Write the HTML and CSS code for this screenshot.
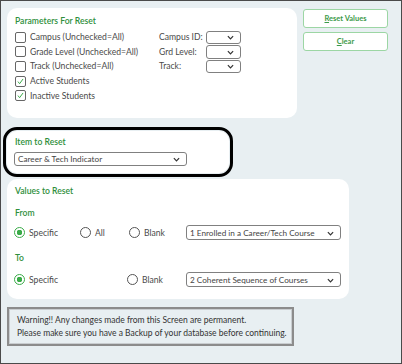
FILE: index.html
```html
<!DOCTYPE html>
<html lang="en">
<head>
    <meta charset="UTF-8">
    <meta name="viewport" content="width=device-width, initial-scale=1.0">
    <title>Reset Values</title>
    <link rel="stylesheet" href="styles.css">
</head>
<body>
    <div class="frame">
        <div class="top-row">
            <section class="panel params">
                <h3 class="panel-title">Parameters For Reset</h3>
                <div class="params-body">
                    <div class="checks">
                        <label class="check-row"><span class="box"></span>Campus (Unchecked=All)</label>
                        <label class="check-row"><span class="box"></span>Grade Level (Unchecked=All)</label>
                        <label class="check-row"><span class="box"></span>Track (Unchecked=All)</label>
                        <label class="check-row"><span class="box checked"><svg viewBox="0 0 11 11"><path d="M2.4 5.6 L4.4 8.2 L8.6 2.4" /></svg></span>Active Students</label>
                        <label class="check-row"><span class="box checked"><svg viewBox="0 0 11 11"><path d="M2.4 5.6 L4.4 8.2 L8.6 2.4" /></svg></span>Inactive Students</label>
                    </div>
                    <div class="fields">
                        <span class="field-label">Campus ID:</span>
                        <span class="select small"><svg class="chev" viewBox="0 0 8 5"><path d="M1 1 L4 4 L7 1" /></svg></span>
                        <span class="field-label">Grd Level:</span>
                        <span class="select small"><svg class="chev" viewBox="0 0 8 5"><path d="M1 1 L4 4 L7 1" /></svg></span>
                        <span class="field-label">Track:</span>
                        <span class="select small"><svg class="chev" viewBox="0 0 8 5"><path d="M1 1 L4 4 L7 1" /></svg></span>
                    </div>
                </div>
            </section>
            <div class="actions">
                <button class="btn"><u>R</u>eset Values</button>
                <button class="btn"><u>C</u>lear</button>
            </div>
        </div>

        <section class="panel item highlight">
            <h3 class="panel-title">Item to Reset</h3>
            <span class="select item-select">Career &amp; Tech Indicator<svg class="chev" viewBox="0 0 8 5"><path d="M1 1 L4 4 L7 1" /></svg></span>
        </section>

        <section class="panel values">
            <h3 class="panel-title">Values to Reset</h3>
            <div class="sub-title from">From</div>
            <div class="radio-row first">
                <label class="radio-opt"><span class="radio on"></span>Specific</label>
                <label class="radio-opt"><span class="radio"></span>All</label>
                <label class="radio-opt"><span class="radio"></span>Blank</label>
                <span class="select value-select">1 Enrolled in a Career/Tech Course<svg class="chev" viewBox="0 0 8 5"><path d="M1 1 L4 4 L7 1" /></svg></span>
            </div>
            <div class="sub-title to">To</div>
            <div class="radio-row second">
                <label class="radio-opt"><span class="radio on"></span>Specific</label>
                <span></span>
                <label class="radio-opt blank-2"><span class="radio"></span>Blank</label>
                <span class="select value-select">2 Coherent Sequence of Courses<svg class="chev" viewBox="0 0 8 5"><path d="M1 1 L4 4 L7 1" /></svg></span>
            </div>
        </section>

        <div class="warning">
            Warning!! Any changes made from this Screen are permanent.<br>
            Please make sure you have a Backup of your database before continuing.
        </div>
    </div>
</body>
</html>
```

FILE: styles.css
```css
* {
    box-sizing: border-box;
}

body {
    margin: 0;
    font-family: Lato, "Open Sans", sans-serif;
    font-size: 8.6px;
    color: #4a4a4a;
}

.frame {
    width: 402px;
    height: 364px;
    border: 1px solid #4a4a4a;
    background-color: #e8eff2;
    padding: 7px 0 0 6px;
}

.top-row {
    display: flex;
    align-items: flex-start;
    gap: 6px;
}

.panel {
    background-color: white;
    border-radius: 10px;
    padding: 7px 8px 0 8px;
}

.panel-title {
    margin: 0;
    font-size: 8.6px;
    line-height: 12px;
    font-weight: 600;
    color: #2f8f3c;
}

.params {
    width: 290px;
    height: 110px;
}

.params-body {
    display: flex;
    margin-top: 3px;
}

.checks {
    width: 144px;
    display: flex;
    flex-direction: column;
}

.check-row {
    display: flex;
    align-items: center;
    gap: 4px;
    height: 14.6px;
    white-space: nowrap;
}

.box {
    width: 11px;
    height: 11px;
    border: 1px solid #666;
    border-radius: 2px;
    display: flex;
    align-items: center;
    justify-content: center;
    background: white;
}

.box svg {
    width: 11px;
    height: 11px;
    fill: none;
    stroke: #3aab48;
    stroke-width: 1.2;
}

.fields {
    display: grid;
    grid-template-columns: 47px 35px;
    grid-auto-rows: 14.6px;
    align-items: center;
}

.field-label {
    white-space: nowrap;
}

.select {
    position: relative;
    display: flex;
    align-items: center;
    background: white;
    border: 1px solid #808080;
    border-radius: 3px;
    font-size: 8.2px;
    color: #444;
    padding-left: 3px;
    white-space: nowrap;
}

.chev {
    position: absolute;
    right: 6px;
    top: 50%;
    width: 7px;
    height: 5px;
    margin-top: -2px;
    fill: none;
    stroke: #333;
    stroke-width: 1.4;
}

.select.small {
    width: 35px;
    height: 13.5px;
}

.actions {
    display: flex;
    flex-direction: column;
    gap: 4px;
    padding-top: 1px;
}

.btn {
    width: 85px;
    height: 19px;
    background: white;
    border: 1.5px solid #9cd6a4;
    border-radius: 3px;
    color: #3c9a49;
    font-family: Lato, "Open Sans", sans-serif;
    font-size: 7.5px;
    font-weight: 700;
    padding: 0;
}

.item {
    width: 222px;
    height: 42px;
    margin-top: 13px;
    padding-top: 5px;
}

.highlight {
    outline: 3.5px solid #000;
    outline-offset: 1px;
}

.item-select {
    width: 173px;
    height: 14px;
    margin-top: 4px;
    margin-left: -1px;
}

.values {
    width: 342px;
    height: 120px;
    margin-top: 6px;
    padding-top: 6px;
}

.sub-title {
    line-height: 12px;
    font-weight: 600;
    color: #2f8f3c;
}

.sub-title.from {
    margin-top: 10px;
}

.sub-title.to {
    margin-top: 12px;
}

.radio-row {
    display: grid;
    grid-template-columns: 66px 49px 57px 155px;
    align-items: center;
    height: 15px;
    margin-left: -1px;
}

.radio-row.first {
    margin-top: 6px;
}

.radio-row.second {
    margin-top: 8px;
}

.radio-opt {
    display: flex;
    align-items: center;
    gap: 4px;
}

.blank-2 {
    margin-left: -2px;
}

.radio {
    width: 11px;
    height: 11px;
    border: 1px solid #555;
    border-radius: 50%;
    background: white;
}

.radio.on {
    border: 1.5px solid #3aab48;
    background: radial-gradient(circle, #3aab48 0 2.6px, white 3px);
}

.value-select {
    width: 155px;
    height: 15px;
}

.warning {
    width: 287px;
    height: 39px;
    margin-top: 8px;
    border: 2px solid #8c8c8c;
    box-shadow: inset 0 0 0 1px #c9cdd0;
    padding: 5px 0 0 8px;
    font-size: 8.5px;
    line-height: 13px;
    color: #333;
}
```
